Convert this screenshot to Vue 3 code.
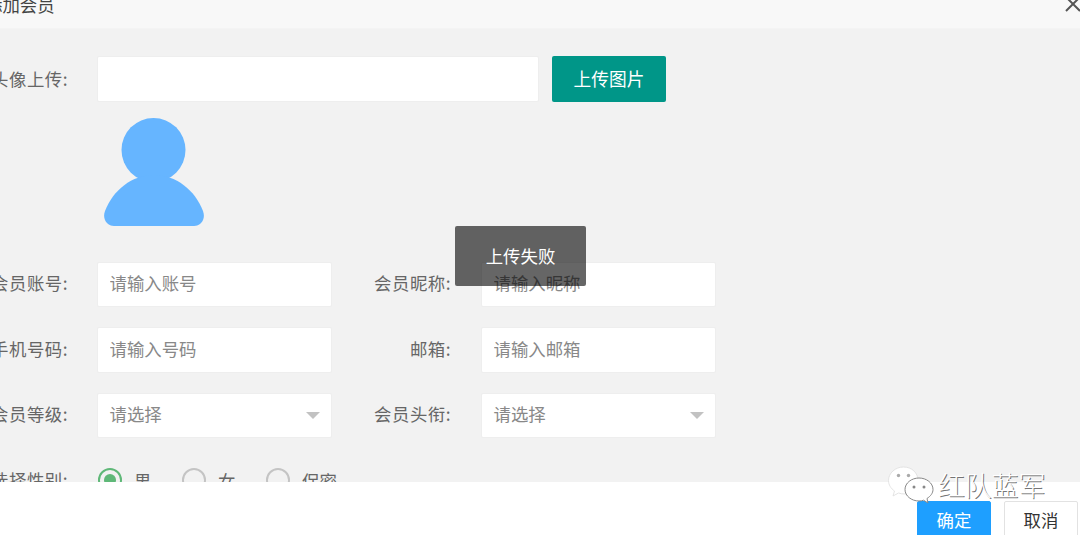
<script setup>
const rows = [
  [{ label: '会员账号:', ph: '请输入账号' }, { label: '会员昵称:', ph: '请输入昵称' }],
  [{ label: '手机号码:', ph: '请输入号码' }, { label: '邮箱:', ph: '请输入邮箱' }],
  [{ label: '会员等级:', select: true }, { label: '会员头衔:', select: true }],
]
const genders = [
  { text: '男', on: true },
  { text: '女', on: false },
  { text: '保密', on: false },
]
</script>

<template>
  <div class="dialog">
    <header class="head">
      <span class="title">添加会员</span>
      <svg class="close" width="15" height="12" viewBox="0 0 15 12" aria-hidden="true">
        <path d="M1 -3 L15 11 M15 -3 L1 11" stroke="#555" stroke-width="2" fill="none" />
      </svg>
    </header>

    <main class="body">
      <div class="row">
        <span class="label upload-label">头像上传:</span>
        <div class="box upload-box"></div>
        <button class="upload-btn">上传图片</button>
      </div>

      <svg class="avatar" width="100" height="108" viewBox="0 0 100 108" aria-hidden="true">
        <circle cx="49.5" cy="32" r="32" fill="#66b5ff" />
        <path d="M50 57C72 57 91 72 99 93C102 101 97 108 90 108H10C3 108-2 101 1 93C9 72 28 57 50 57Z" fill="#66b5ff" />
      </svg>

      <div v-for="(row, i) in rows" :key="i" class="row pair">
        <div v-for="field in row" :key="field.label" class="field">
          <span class="label">{{ field.label }}</span>
          <div v-if="field.select" class="box select">
            <span class="select-text">请选择</span>
            <i class="arrow"></i>
          </div>
          <input v-else class="box text-input" :placeholder="field.ph" />
        </div>
      </div>

      <div class="row gender">
        <span class="label">选择性别:</span>
        <div class="radios">
          <span v-for="g in genders" :key="g.text" class="radio">
            <i class="dot" :class="{ on: g.on }"></i>{{ g.text }}
          </span>
        </div>
      </div>
    </main>

    <footer class="foot">
      <button class="btn primary">确定</button>
      <button class="btn">取消</button>
    </footer>

    <div class="toast">上传失败</div>

    <div class="watermark">
      <svg width="46" height="38" viewBox="0 0 46 38" aria-hidden="true">
        <path d="M15.500 1C7.500 1 0.500 7 0.500 14.500C0.500 19 3 22.500 6.500 25L5 30L10.500 27C12.500 27.700 14.500 28 17 28C24 28 30 22 30 14.500C30 7 24 1 15.500 1Z" fill="#fff" stroke="#ddd" stroke-width="0.8" />
        <path d="M31 12C23.500 12 17 17 17 23.500C17 30 23.500 35 31 35C32.800 35 34.200 34.700 35.600 34.200L40 37L39 32.500C42.500 30.200 45 27.200 45 23.500C45 17 38.500 12 31 12Z" fill="#fff" stroke="#888" stroke-width="1" />
        <circle cx="10.500" cy="9.500" r="1.700" fill="#aaa" />
        <circle cx="20.500" cy="9.500" r="1.700" fill="#aaa" />
        <circle cx="26" cy="21" r="1.500" fill="#888" />
        <circle cx="36" cy="21" r="1.500" fill="#888" />
      </svg>
      <span class="mark-text">红队蓝军</span>
    </div>
  </div>
</template>

<style scoped>
.dialog {
  position: relative;
  display: flex;
  flex-direction: column;
  width: 1080px;
  height: 535px;
  overflow: hidden;
  background: #fff;
  font-family: "Noto Sans CJK SC", "Liberation Sans", sans-serif;
  font-size: 17.4px;
  color: #666;
}
.head {
  flex: none;
  display: flex;
  justify-content: space-between;
  height: 29px;
  overflow: hidden;
  background: #f8f8f8;
  border-bottom: 1px solid #f4f4f4;
  box-sizing: border-box;
}
.title {
  margin: -8px 0 0 -15px;
  line-height: 26px;
  color: #444;
}
.close {
  flex: none;
}
.body {
  flex: none;
  height: 453px;
  overflow: hidden;
  box-sizing: border-box;
  padding-top: 27px;
  background: #f2f2f2;
}
.row {
  display: flex;
  align-items: center;
  height: 46px;
}
.pair {
  gap: 43px;
  height: 45.5px;
  margin-bottom: 20px;
}
.field {
  display: flex;
  align-items: center;
}
.label {
  flex: none;
  display: flex;
  justify-content: flex-end;
  width: 68px;
  margin-right: 29px;
  padding-bottom: 2px;
  white-space: nowrap;
  line-height: 44px;
  letter-spacing: 0.5px;
}
.upload-label {
  padding-bottom: 0;
}
.field + .field .label {
  width: 76px;
  margin-right: 30px;
}
.box {
  box-sizing: border-box;
  height: 45.500px;
  background: #fff;
  border: 1px solid #eeeeee;
  border-radius: 2px;
}
.upload-box {
  width: 442px;
  height: 46px;
}
.upload-btn {
  width: 114px;
  height: 46px;
  margin-left: 13px;
  padding: 0 0 3px;
  border: 0;
  border-radius: 2px;
  background: #009688;
  color: #fff;
  font: inherit;
  font-size: 17.700px;
}
.avatar {
  display: block;
  margin: 16px 0 35.500px 104px;
}
.text-input {
  width: 235px;
  padding: 0 12px 3px 11.500px;
  outline: none;
  font: inherit;
  color: #666;
}
.text-input::placeholder {
  color: #888;
  opacity: 1;
}
.select {
  display: flex;
  align-items: center;
  justify-content: space-between;
  width: 235px;
  padding: 0 11px 0 11.500px;
  color: #888;
}
.select-text {
  padding-bottom: 3px;
}
.arrow {
  width: 0;
  height: 0;
  border-style: solid;
  border-width: 7px 7.500px 0;
  border-color: #c2c2c2 transparent transparent;
}
.radios {
  display: flex;
  align-items: center;
  margin-top: -2px;
}
.radio {
  display: flex;
  align-items: center;
  width: 84px;
}
.dot {
  position: relative;
  flex: none;
  box-sizing: border-box;
  width: 24px;
  height: 24px;
  margin: 0 12px 0 1px;
  border: 2px solid #c4c4c4;
  border-radius: 50%;
}
.dot.on {
  border-color: #5fb878;
}
.dot.on::after {
  content: "";
  position: absolute;
  inset: 4px;
  border-radius: 50%;
  background: #5fb878;
}
.foot {
  flex: none;
  display: flex;
  justify-content: flex-end;
  gap: 13px;
  padding: 19px 2px 0 0;
  background: #fff;
}
.btn {
  flex: none;
  box-sizing: border-box;
  width: 74px;
  height: 38px;
  padding: 0 0 1px;
  border: 1px solid #e2e2e2;
  border-radius: 2px;
  background: #fff;
  color: #333;
  font: inherit;
}
.btn.primary {
  border-color: #1e9fff;
  background: #1e9fff;
  color: #fff;
}
.toast {
  position: absolute;
  left: 455px;
  top: 226px;
  width: 131px;
  height: 60px;
  border-radius: 2px;
  background: rgba(0, 0, 0, 0.6);
  color: #fff;
  line-height: 60px;
  text-align: center;
}
.watermark {
  position: absolute;
  left: 888px;
  top: 466px;
  display: flex;
  align-items: center;
  gap: 4px;
}
.mark-text {
  font-size: 26.800px;
  line-height: 38px;
  font-weight: 300;
  color: #fff;
  text-shadow: 1px 1px 0 rgba(80, 80, 80, 0.8);
  white-space: nowrap;
}
</style>
